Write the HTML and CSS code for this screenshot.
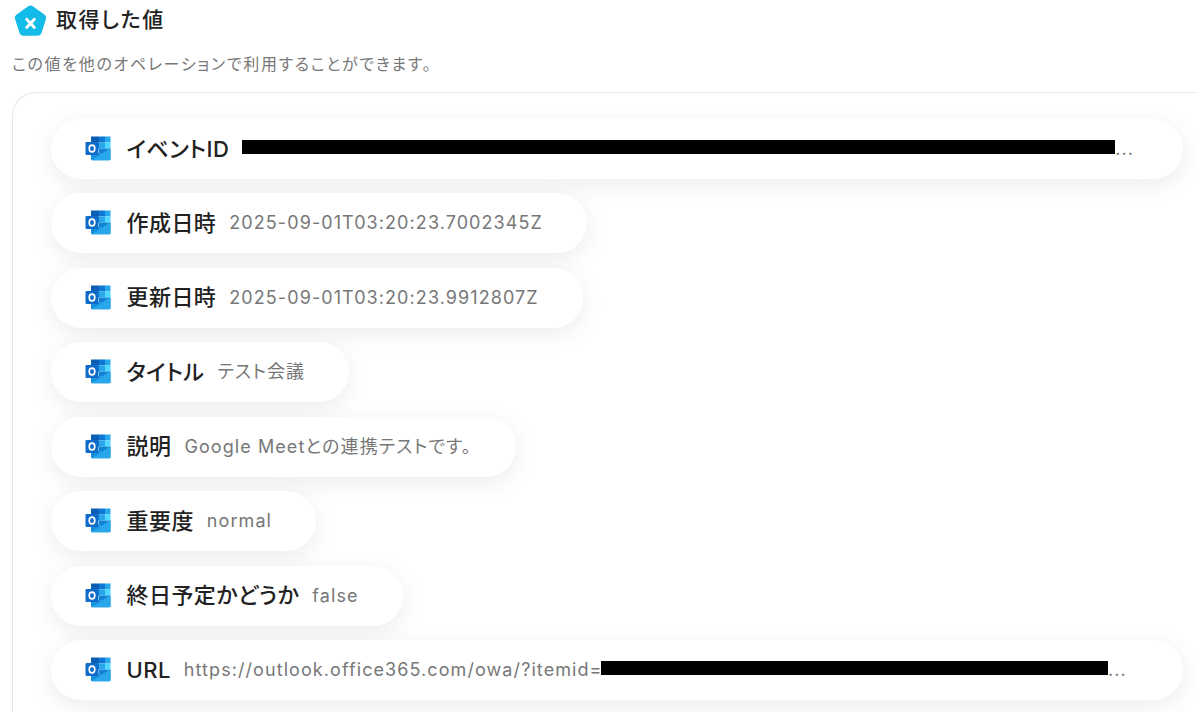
FILE: index.html
```html
<!DOCTYPE html>
<html lang="ja">
<head>
    <meta charset="UTF-8">
    <title>取得した値</title>
    <link rel="stylesheet" href="styles.css">
</head>
<body>
    <svg class="icon-defs" width="0" height="0" aria-hidden="true">
        <symbol id="outlook" viewBox="0 0 26 25">
            <rect x="6" y="0.500" width="8" height="6" fill="#0a5fb4"/>
            <rect x="14" y="0.500" width="6" height="6" fill="#0f78d4"/>
            <rect x="20" y="0.500" width="5.500" height="6" fill="#28a8ea"/>
            <rect x="6" y="6.500" width="8" height="6" fill="#0f78d4"/>
            <rect x="14" y="6.500" width="6" height="6" fill="#28a8ea"/>
            <rect x="20" y="6.500" width="5.500" height="6" fill="#50d9ff"/>
            <path fill="#1083d6" d="M14 12.500h11.500l-9 6-2.500-1.500z"/>
            <path fill="#1490df" d="M6 12.500l10.500 6 9-6V23a1.200 1.200 0 0 1-1.200 1.200H7.200A1.200 1.200 0 0 1 6 23z"/>
            <path fill="#28a8ea" d="M6.500 24.200l19-11.700V23a1.200 1.200 0 0 1-1.200 1.200z"/>
            <rect x="0.500" y="6" width="13" height="13" rx="1.200" fill="#0f6cc9"/>
            <ellipse cx="7" cy="12.500" rx="2.800" ry="3.400" fill="none" stroke="#fff" stroke-width="1.600"/>
        </symbol>
    </svg>

    <div class="heading">
        <svg class="badge" viewBox="0 0 32 32" aria-hidden="true">
            <path fill="#12bbe8" d="M13.600 2.200a4 4 0 0 1 4.800 0l10.200 7.500a4 4 0 0 1 1.400 4.500l-3.900 12a4 4 0 0 1-3.800 2.800H9.700a4 4 0 0 1-3.800-2.800L2 14.200a4 4 0 0 1 1.400-4.500z"/>
            <path fill="none" stroke="#fff" stroke-width="2.600" stroke-linecap="round" d="M12.500 14l7 7.500M19.500 14l-7 7.500"/>
        </svg>
        <h2>取得した値</h2>
    </div>
    <p class="note">この値を他のオペレーションで利用することができます。</p>

    <div class="panel">
        <div class="pill wide">
            <svg class="app-icon"><use href="#outlook"/></svg>
            <span class="name">イベントID</span>
            <span class="value"><span class="mask mask-id"></span>...</span>
        </div>
        <div class="pill">
            <svg class="app-icon"><use href="#outlook"/></svg>
            <span class="name">作成日時</span>
            <span class="value">2025-09-01T03:20:23.7002345Z</span>
        </div>
        <div class="pill">
            <svg class="app-icon"><use href="#outlook"/></svg>
            <span class="name">更新日時</span>
            <span class="value">2025-09-01T03:20:23.9912807Z</span>
        </div>
        <div class="pill">
            <svg class="app-icon"><use href="#outlook"/></svg>
            <span class="name">タイトル</span>
            <span class="value">テスト会議</span>
        </div>
        <div class="pill">
            <svg class="app-icon"><use href="#outlook"/></svg>
            <span class="name">説明</span>
            <span class="value">Google Meetとの連携テストです。</span>
        </div>
        <div class="pill">
            <svg class="app-icon"><use href="#outlook"/></svg>
            <span class="name">重要度</span>
            <span class="value">normal</span>
        </div>
        <div class="pill">
            <svg class="app-icon"><use href="#outlook"/></svg>
            <span class="name">終日予定かどうか</span>
            <span class="value">false</span>
        </div>
        <div class="pill wide">
            <svg class="app-icon"><use href="#outlook"/></svg>
            <span class="name">URL</span>
            <span class="value">https://outlook.office365.com/owa/?itemid=<span class="mask mask-url"></span>...</span>
        </div>
    </div>
</body>
</html>
```

FILE: styles.css
```css
* {
    margin: 0;
    padding: 0;
    box-sizing: border-box;
}

html, body {
    height: 100%;
    overflow: hidden;
}

body {
    font-family: Inter, "Noto Sans CJK JP", sans-serif;
    font-feature-settings: "palt";
    background: #fff;
    padding-left: 12px;
}

.icon-defs {
    position: absolute;
}

.heading {
    display: flex;
    align-items: center;
    gap: 8px;
    height: 40px;
    padding-left: 1px;
}

.badge {
    width: 35px;
    height: 35px;
    margin-top: 2px;
}

.heading h2 {
    font-size: 21px;
    line-height: 28px;
    font-weight: 500;
    color: #222;
    letter-spacing: 1.6px;
    margin-bottom: 1px;
}

.note {
    margin-top: 13px;
    font-size: 16px;
    line-height: 22px;
    color: #777;
    letter-spacing: 1.68px;
}

.panel {
    margin-top: 17px;
    width: 1200px;
    height: 640px;
    padding: 26px 0 0 38px;
    border: 1px solid #e6e6e6;
    border-right: none;
    border-radius: 24px 0 0 0;
    display: flex;
    flex-direction: column;
    align-items: flex-start;
    gap: 14.45px;
}

.pill {
    display: flex;
    align-items: center;
    height: 60px;
    padding: 0 44px 0 34px;
    background: #fff;
    border-radius: 30px;
    box-shadow: 0 6px 24px rgba(0, 0, 0, 0.08);
    white-space: nowrap;
}

.pill.wide {
    width: 1132px;
}

.app-icon {
    width: 26px;
    height: 25px;
    flex: none;
    margin-right: 15.5px;
    margin-bottom: 1px;
}

.name {
    font-size: 22px;
    line-height: 28px;
    font-weight: 500;
    color: #222;
    letter-spacing: 0.44px;
    margin-right: 13px;
    margin-bottom: 1px;
}

.value {
    font-size: 18px;
    line-height: 24px;
    color: #777;
    letter-spacing: 1.08px;
}

.mask {
    display: inline-block;
    height: 14px;
    background: #000;
    vertical-align: 1px;
}

.mask-id {
    width: 873px;
}

.mask-url {
    width: 507px;
    margin-left: -1.5px;
}
```
